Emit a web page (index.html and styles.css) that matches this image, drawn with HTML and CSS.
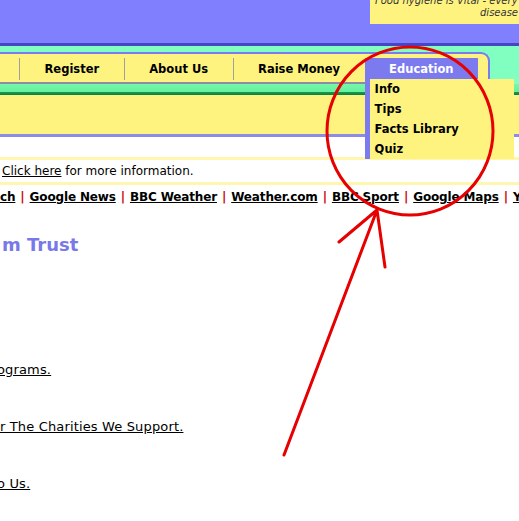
FILE: index.html
```html
<!DOCTYPE html>
<html>
<head>
<meta charset="utf-8">
<title>Education menu</title>
<link rel="stylesheet" href="styles.css">
</head>
<body>
<div class="page">
  <header class="masthead">
    <div class="tip">
      <p class="first">Food hygiene is Vital - every</p>
      <p class="r">disease</p>
    </div>
  </header>
  <div class="navzone">
    <nav class="nav">
      <span class="nav-item lead"></span>
      <a class="nav-item sep" href="#">Register</a>
      <a class="nav-item sep" href="#">About Us</a>
      <a class="nav-item sep" href="#">Raise Money</a>
      <div class="nav-item active">Education
        <ul class="dropdown">
          <li>Info</li>
          <li>Tips</li>
          <li>Facts Library</li>
          <li>Quiz</li>
        </ul>
      </div>
    </nav>
  </div>
  <div class="greenband"></div>
  <div class="band"></div>
  <div class="gap"></div>
  <div class="notice"><a href="#">Click here</a> for more information.</div>
  <div class="quicklinks"><a href="#">ch</a><span class="bar">|</span><a href="#">Google News</a><span class="bar">|</span><a href="#">BBC Weather</a><span class="bar">|</span><a href="#">Weather.com</a><span class="bar">|</span><a href="#">BBC Sport</a><span class="bar">|</span><a href="#">Google Maps</a><span class="bar">|</span><a href="#">Y</a></div>
  <h1 class="title">m Trust</h1>
  <div class="links">
    <p class="cut"><a href="#">ograms.</a></p>
    <p><a href="#">r The Charities We Support.</a></p>
    <p class="cut"><a href="#">o Us.</a></p>
  </div>
  <svg class="annotation" width="519" height="521" viewBox="0 0 519 521">
    <ellipse cx="410" cy="131" rx="83" ry="84" fill="none" stroke="#e60000" stroke-width="3"/>
    <path d="M284 455 L377 210 M377 210 L339 242 M377 210 L385 267" fill="none" stroke="#e60000" stroke-width="3" stroke-linecap="round"/>
  </svg>
</div>
</body>
</html>
```
FILE: styles.css
```css
* { box-sizing: border-box; }
html, body { margin: 0; padding: 0; }
body {
  width: 519px;
  height: 521px;
  overflow: hidden;
  background: #ffffff;
  font-family: "DejaVu Sans", Verdana, sans-serif;
  color: #000;
}
a { color: #000; }
.page { position: relative; width: 519px; height: 521px; overflow: hidden; }

.masthead {
  height: 46px;
  background: #8080ff;
  border-bottom: 3px solid #4646c4;
  display: flex;
  justify-content: flex-end;
  align-items: flex-start;
}
.tip {
  width: 149px;
  height: 24px;
  background: #fff380;
  overflow: hidden;
  font-size: 10px;
  font-style: italic;
  line-height: 12px;
  color: #333;
  padding: 0 1px 0 5px;
}
.tip p { margin: 0; white-space: nowrap; }
.tip .first { margin-top: -5px; }
.tip .r { text-align: right; }

.navzone { background: #80ffc0; padding-top: 6px; }
.nav {
  width: 490px;
  height: 32px;
  background: #fff380;
  border: 2px solid #7b7bef;
  border-left: 0;
  border-bottom-color: #8c8ca8;
  border-top-right-radius: 9px;
  display: flex;
  align-items: flex-start;
}
.nav-item {
  margin-top: 4px;
  height: 22px;
  line-height: 23px;
  padding: 0 24.5px;
  font-size: 11.5px;
  font-weight: bold;
  color: #000;
  white-space: nowrap;
  text-decoration: none;
}
.nav-item.lead { width: 19px; padding: 0; }
.nav-item.sep { border-left: 1px solid #a0a0a0; }
.nav-item.active { background: #7b7bef; color: #fff; position: relative; }
.dropdown {
  position: absolute;
  left: 0;
  top: 21px;
  width: 149px;
  margin: 0;
  padding: 0 0 0 5px;
  list-style: none;
  background: #fff380;
  border-left: 5px solid #7b7bef;
  z-index: 2;
}
.dropdown li { line-height: 20px; color: #000; }

.greenband {
  height: 11px;
  background: linear-gradient(#74f8a8 0, #66f09c 8px, #1a9a50 8px, #0a8040 11px);
}
.band { height: 42px; background: #fff380; border-bottom: 3px solid #8c8ce8; }
.gap { height: 20px; }
.notice {
  height: 28px;
  border-top: 3px solid #fff6b0;
  border-bottom: 3px solid #fff6b0;
  font-size: 12px;
  line-height: 22px;
  padding-left: 2px;
}
.quicklinks {
  height: 19px;
  padding-top: 4px;
  line-height: 16px;
  font-size: 12px;
  font-weight: bold;
  letter-spacing: -0.15px;
  white-space: nowrap;
}
.bar { color: #cc0000; margin: 0 5px; }
.title {
  margin: 30px 0 0 2px;
  font-size: 18px;
  line-height: 22px;
  font-weight: bold;
  color: #7878e8;
}
.links { margin-top: 106px; }
.links p { margin: 0 0 41px; font-size: 13px; line-height: 16px; letter-spacing: 0.15px; white-space: nowrap; }
.links p.cut { text-indent: -3px; }
.annotation { position: absolute; left: 0; top: 0; pointer-events: none; z-index: 5; }
```
